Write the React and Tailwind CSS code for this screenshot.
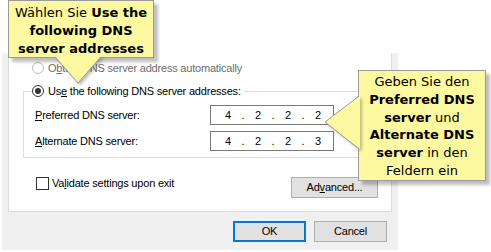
import React from "react";

const callout = "font-['DejaVu_Sans',sans-serif] text-[13px] text-black text-center";

const IpField = ({ parts }) => (
  <div className="flex h-[20px] w-[124px] items-center border border-[#7a7a7a] bg-white pl-[7px] text-[11px]">
    {parts.map((p, i) => (
      <React.Fragment key={i}>
        <span className="w-[20px] text-center">{p}</span>
        {i < parts.length - 1 && <span className="w-[10px] text-center">.</span>}
      </React.Fragment>
    ))}
  </div>
);

const Button = ({ children, className = "" }) => (
  <div
    className={
      "flex h-[21px] items-center justify-center bg-[#e1e1e1] text-[11px] " +
      className
    }
  >
    {children}
  </div>
);

export default function App() {
  return (
    <div className="relative h-[252px] w-[491px] overflow-hidden bg-white pl-[2px] pt-[53px] font-['Liberation_Sans',Arial,sans-serif] text-[11px] tracking-[-0.2px] text-black">
      {/* dialog */}
      <div className="h-[197px] w-[396px] bg-[#f0f0f0] px-[6px]">
        <div className="h-[159px] w-[384px] border border-t-0 border-[#dcdcdc] bg-white pl-[14px] pr-[13px] pt-[5px]">
          <div className="flex h-[20px] items-center gap-[4px] pl-[9px] text-[#6d6d6d]">
            <span className="h-[12px] w-[12px] rounded-full border border-[#bcbcbc] bg-white" />
            <span>
              O<u>b</u>tain DNS server address automatically
            </span>
          </div>

          <fieldset className="mt-[6px] border border-[#dcdcdc] pb-[6px] pt-[7px]">
            <legend className="ml-[8px] pr-[3px]">
              <span className="flex h-[14px] items-center gap-[4px]">
                <span className="flex h-[12px] w-[12px] items-center justify-center rounded-full border border-[#333]">
                  <span className="h-[6px] w-[6px] rounded-full bg-[#333]" />
                </span>
                <span>
                  Us<u>e</u> the following DNS server addresses:
                </span>
              </span>
            </legend>
            <div className="flex flex-col gap-[6px] pl-[11px]">
              <div className="grid grid-cols-[175px_124px] items-center">
                <span>
                  <u>P</u>referred DNS server:
                </span>
                <IpField parts={["4", "2", "2", "2"]} />
              </div>
              <div className="grid grid-cols-[175px_124px] items-center">
                <span>
                  <u>A</u>lternate DNS server:
                </span>
                <IpField parts={["4", "2", "2", "3"]} />
              </div>
            </div>
          </fieldset>

          <div className="mt-[19px] flex items-start justify-between">
            <div className="ml-[13px] flex h-[13px] items-center gap-[3px]">
              <span className="h-[13px] w-[13px] border border-[#333] bg-white" />
              <span>
                Va<u>l</u>idate settings upon exit
              </span>
            </div>
            <Button className="w-[87px] border border-[#adadad]">
              Ad<u>v</u>anced...
            </Button>
          </div>
        </div>

        <div className="mt-[9px] flex justify-end gap-[8px] pr-[5px]">
          <Button className="w-[73px] border-2 border-[#0078d7]">OK</Button>
          <Button className="w-[73px] border border-[#adadad]">Cancel</Button>
        </div>
      </div>

      {/* callout 1 */}
      <div
        className={
          "absolute left-[8px] top-0 h-[58px] w-[146px] border border-[#9a9a9a] bg-[#fcf9a0] pt-[3px] leading-[18px] tracking-normal shadow-[4px_4px_3px_rgba(0,0,0,0.25)] " +
          callout
        }
      >
        <div>
          Wählen Sie <b>Use the</b>
        </div>
        <div>
          <b>following DNS</b>
        </div>
        <div>
          <b>server addresses</b>
        </div>
      </div>
      <svg
        className="absolute left-[50px] top-[50px] drop-shadow-[2px_2px_1.5px_rgba(0,0,0,0.25)]"
        width="60"
        height="40"
        viewBox="0 0 60 40"
      >
        <polygon points="5,6 51,6 28,33" fill="#fcf9a0" />
        <polyline points="5,7 28,33 51,7" fill="none" stroke="#9a9a9a" strokeWidth="1" />
      </svg>

      {/* callout 2 */}
      <div
        className={
          "absolute left-[358px] top-[70px] h-[111px] w-[128px] border border-[#9a9a9a] bg-[#fcf9a0] pt-[2px] leading-[17.8px] tracking-normal shadow-[4px_4px_3px_rgba(0,0,0,0.25)] " +
          callout
        }
      >
        <div>Geben Sie den</div>
        <div>
          <b>Preferred DNS</b>
        </div>
        <div>
          <b>server</b> und
        </div>
        <div>
          <b>Alternate DNS</b>
        </div>
        <div>
          <b>server</b> in den
        </div>
        <div>Feldern ein</div>
      </div>
      <svg
        className="absolute left-[322px] top-[93px] drop-shadow-[2px_2px_1.5px_rgba(0,0,0,0.25)]"
        width="40"
        height="60"
        viewBox="0 0 40 60"
      >
        <polygon points="38,3 3,29 38,56" fill="#fcf9a0" />
        <polyline points="37,3 3,29 37,56" fill="none" stroke="#9a9a9a" strokeWidth="1" />
      </svg>
    </div>
  );
}
